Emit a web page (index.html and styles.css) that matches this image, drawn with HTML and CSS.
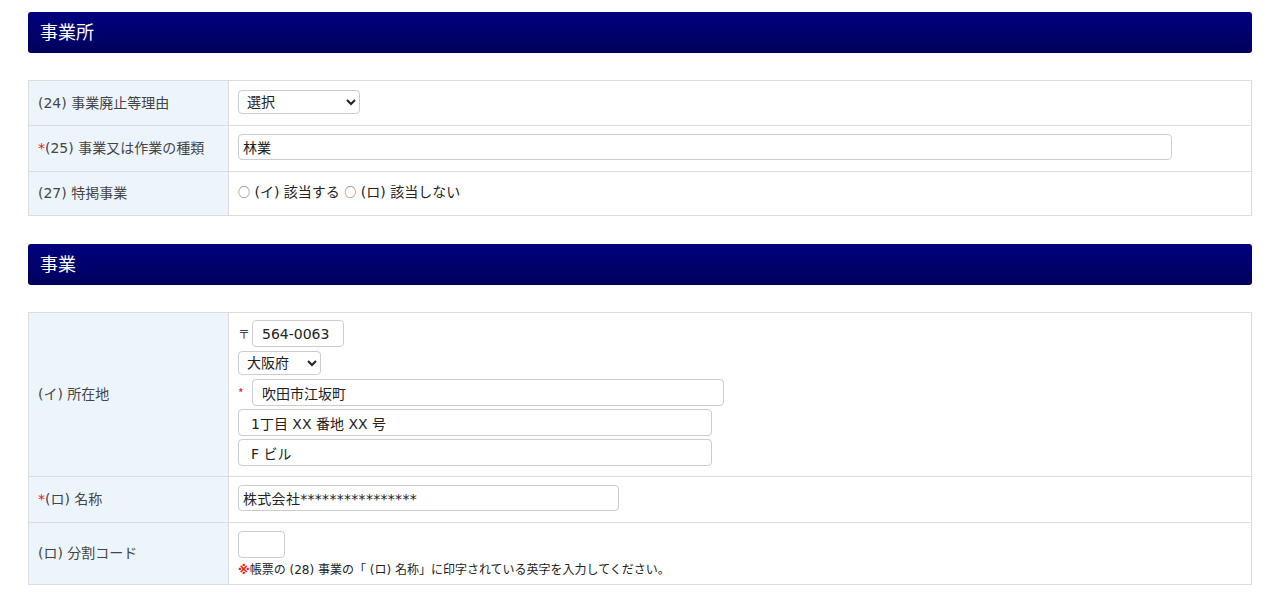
FILE: index.html
```html
<!DOCTYPE html>
<html lang="ja">
<head>
<meta charset="utf-8">
<link rel="stylesheet" href="styles.css">
</head>
<body>
<div class="page">
  <h2 class="sec-head">事業所</h2>
  <table class="form-table">
    <tr class="r1">
      <th>(24) 事業廃止等理由</th>
      <td>
        <select class="sel sel-reason"><option>選択</option></select>
      </td>
    </tr>
    <tr class="r2">
      <th><span class="req">*</span>(25) 事業又は作業の種類</th>
      <td><input class="inp inp-kind" type="text" value="林業"></td>
    </tr>
    <tr class="r3">
      <th>(27) 特掲事業</th>
      <td class="radio-cell"><span class="circ">○</span> (イ) 該当する <span class="circ">○</span> (ロ) 該当しない</td>
    </tr>
  </table>

  <h2 class="sec-head">事業</h2>
  <table class="form-table">
    <tr class="r4">
      <th>(イ) 所在地</th>
      <td class="addr-cell">
        <div class="addr-line"><span class="mark">〒</span><input class="inp inp-zip" type="text" value="564-0063"></div>
        <div class="addr-line"><select class="sel sel-pref"><option>大阪府</option></select></div>
        <div class="addr-line"><span class="mark req">*</span><input class="inp inp-addr inp-city" type="text" value="吹田市江坂町"></div>
        <div class="addr-line"><input class="inp inp-addr inp-street" type="text" value="1丁目 XX 番地 XX 号"></div>
        <div class="addr-line"><input class="inp inp-addr inp-street" type="text" value="F ビル"></div>
      </td>
    </tr>
    <tr class="r5">
      <th><span class="req">*</span>(ロ) 名称</th>
      <td><input class="inp inp-name" type="text" value="株式会社****************"></td>
    </tr>
    <tr class="r6">
      <th>(ロ) 分割コード</th>
      <td class="code-cell">
        <input class="inp inp-code" type="text" value="">
        <div class="note"><span class="note-mark">※</span>帳票の (28) 事業の「 (ロ) 名称」に印字されている英字を入力してください。</div>
      </td>
    </tr>
  </table>
</div>
</body>
</html>
```

FILE: styles.css
```css
* { box-sizing: border-box; }
html, body { margin: 0; padding: 0; background: #fff; }
body {
  font-family: "DejaVu Sans", "Noto Sans CJK JP", sans-serif;
  color: #333;
  font-size: 14px;
}
.page { padding: 12px 28px 0 28px; }
.sec-head {
  margin: 0 0 27px 0;
  height: 41px;
  line-height: 38px;
  padding: 0 12px;
  font-family: "Noto Sans CJK JP", sans-serif;
  font-size: 18px;
  font-weight: normal;
  color: #fff;
  border-radius: 3px;
  background: linear-gradient(#000080, #00005c);
}
.form-table {
  width: 100%;
  border-collapse: collapse;
  margin-bottom: 28px;
}
.form-table th, .form-table td {
  border: 1px solid #dcdcdc;
  padding: 0 9px 3px 9px;
  vertical-align: middle;
  text-align: left;
}
.form-table th {
  width: 200px;
  background: #edf5fc;
  font-weight: normal;
  font-size: 14px;
  color: #444;
}
.req { color: #e02020; }
.r1 { height: 45px; }
.r2 { height: 46px; }
.r3 { height: 44px; }
.r5 { height: 46px; }
.r6 { height: 62px; }
.sel {
  font-family: inherit;
  font-size: 14px;
  color: #222;
  height: 24px;
  border: 1px solid #ccc;
  border-radius: 4px;
  background: #fff;
  padding: 0 4px;
}
.sel-reason { width: 122px; }
.sel-pref { width: 83px; }
.inp {
  font-family: inherit;
  font-size: 14px;
  color: #222;
  height: 26px;
  border: 1px solid #ccc;
  border-radius: 4px;
  padding: 0 4px;
  background: #fff;
}
.inp-kind { width: 934px; }
.form-table .radio-cell { font-size: 14px; color: #222; padding-bottom: 5px; }
.circ { font-family: "Noto Sans CJK JP", sans-serif; font-size: 12px; color: #666; }
.form-table .addr-cell { padding-top: 7px; padding-bottom: 10px; }
.addr-line { display: flex; align-items: center; margin-bottom: 3px; }
.addr-line:last-child { margin-bottom: 0; }
.mark { width: 14px; font-size: 12px; color: #444; font-family: "Noto Sans CJK JP", sans-serif; }
.mark.req { color: #e02020; }
.inp-zip { width: 92px; height: 27px; font-size: 14px; padding: 0 9px; }
.sel-pref { margin: 1px 0; }
.inp-addr { height: 27px; padding: 0 12px; }
.inp-city { width: 472px; padding-left: 9px; }
.inp-street { width: 474px; }
.inp-name { width: 381px; letter-spacing: 0.3px; }
.form-table .code-cell { padding-top: 8px; padding-bottom: 7px; }
.inp-code { width: 47px; height: 27px; display: block; }
.note { font-size: 12px; color: #222; margin-top: 2px; }
.note-mark { color: #e02020; font-weight: bold; }
```
